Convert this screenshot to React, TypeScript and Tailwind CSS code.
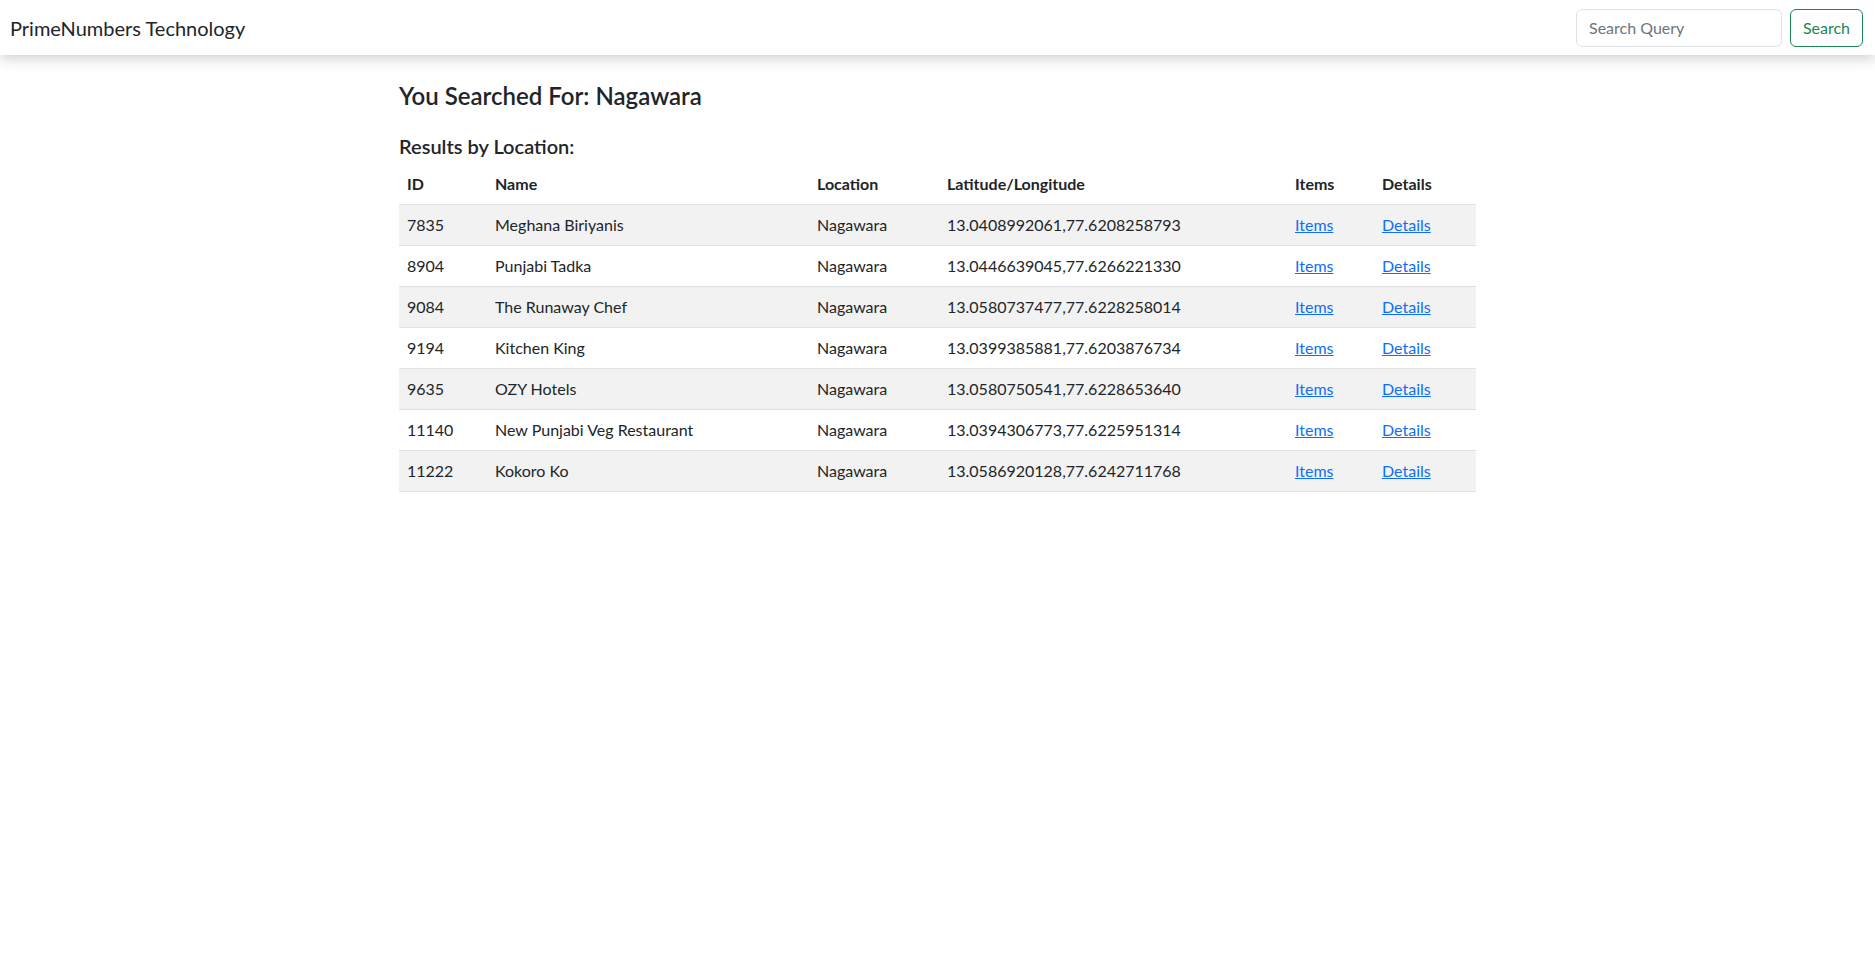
const ROWS = [
  { id: "7835", name: "Meghana Biriyanis", location: "Nagawara", latLng: "13.0408992061,77.6208258793" },
  { id: "8904", name: "Punjabi Tadka", location: "Nagawara", latLng: "13.0446639045,77.6266221330" },
  { id: "9084", name: "The Runaway Chef", location: "Nagawara", latLng: "13.0580737477,77.6228258014" },
  { id: "9194", name: "Kitchen King", location: "Nagawara", latLng: "13.0399385881,77.6203876734" },
  { id: "9635", name: "OZY Hotels", location: "Nagawara", latLng: "13.0580750541,77.6228653640" },
  { id: "11140", name: "New Punjabi Veg Restaurant", location: "Nagawara", latLng: "13.0394306773,77.6225951314" },
  { id: "11222", name: "Kokoro Ko", location: "Nagawara", latLng: "13.0586920128,77.6242711768" },
]

const Navbar = () => (
  <nav className="relative z-10 flex h-[55px] items-center justify-between bg-white pl-[10px] pr-[12px] shadow-[0_4px_12px_rgba(0,0,0,0.18)]">
    <a href="#" className="text-[20px] leading-[30px] text-[#212529]">
      PrimeNumbers Technology
    </a>
    <form className="flex items-center gap-2" onSubmit={(e) => e.preventDefault()}>
      <input
        type="search"
        placeholder="Search Query"
        className="h-[38px] w-[206px] rounded-[6px] border border-[#dee2e6] px-3 text-[16px] text-[#212529] outline-none placeholder:text-[#6c757d]"
      />
      <button
        type="submit"
        className="h-[38px] w-[73px] rounded-[6px] border border-[#198754] text-[16px] text-[#198754]"
      >
        Search
      </button>
    </form>
  </nav>
)

const App = () => {
  return (
    <div className="min-h-screen bg-white font-['Lato',sans-serif] text-[16px] text-[#212529]">
      <Navbar />

      <main className="mx-auto w-[1077px] pt-[27px]">
        <h4 className="mb-[23px] text-[24px] font-semibold leading-[1.2]">
          You Searched For: Nagawara
        </h4>
        <h5 className="mb-[6px] text-[20px] font-semibold leading-[24px]">
          Results by Location:
        </h5>

        <table className="w-full border-collapse text-left">
          <thead>
            <tr className="border-b border-[#dee2e6]">
              <th className="w-[88px] p-2 font-bold leading-6">ID</th>
              <th className="w-[322px] p-2 font-bold leading-6">Name</th>
              <th className="w-[130px] p-2 font-bold leading-6">Location</th>
              <th className="w-[348px] p-2 font-bold leading-6">Latitude/Longitude</th>
              <th className="w-[87px] p-2 font-bold leading-6">Items</th>
              <th className="p-2 font-bold leading-6">Details</th>
            </tr>
          </thead>
          <tbody>
            {ROWS.map((row, i) => (
              <tr
                key={row.id}
                className={i % 2 === 0 ? "border-b border-[#dee2e6] bg-[#f2f2f2]" : "border-b border-[#dee2e6] bg-white"}
              >
                <td className="p-2 leading-6">{row.id}</td>
                <td className="p-2 leading-6">{row.name}</td>
                <td className="p-2 leading-6">{row.location}</td>
                <td className="p-2 leading-6">{row.latLng}</td>
                <td className="p-2 leading-6">
                  <a href="#" className="text-[#0d6efd] underline">Items</a>
                </td>
                <td className="p-2 leading-6">
                  <a href="#" className="text-[#0d6efd] underline">Details</a>
                </td>
              </tr>
            ))}
          </tbody>
        </table>
      </main>
    </div>
  )
}

export default App
